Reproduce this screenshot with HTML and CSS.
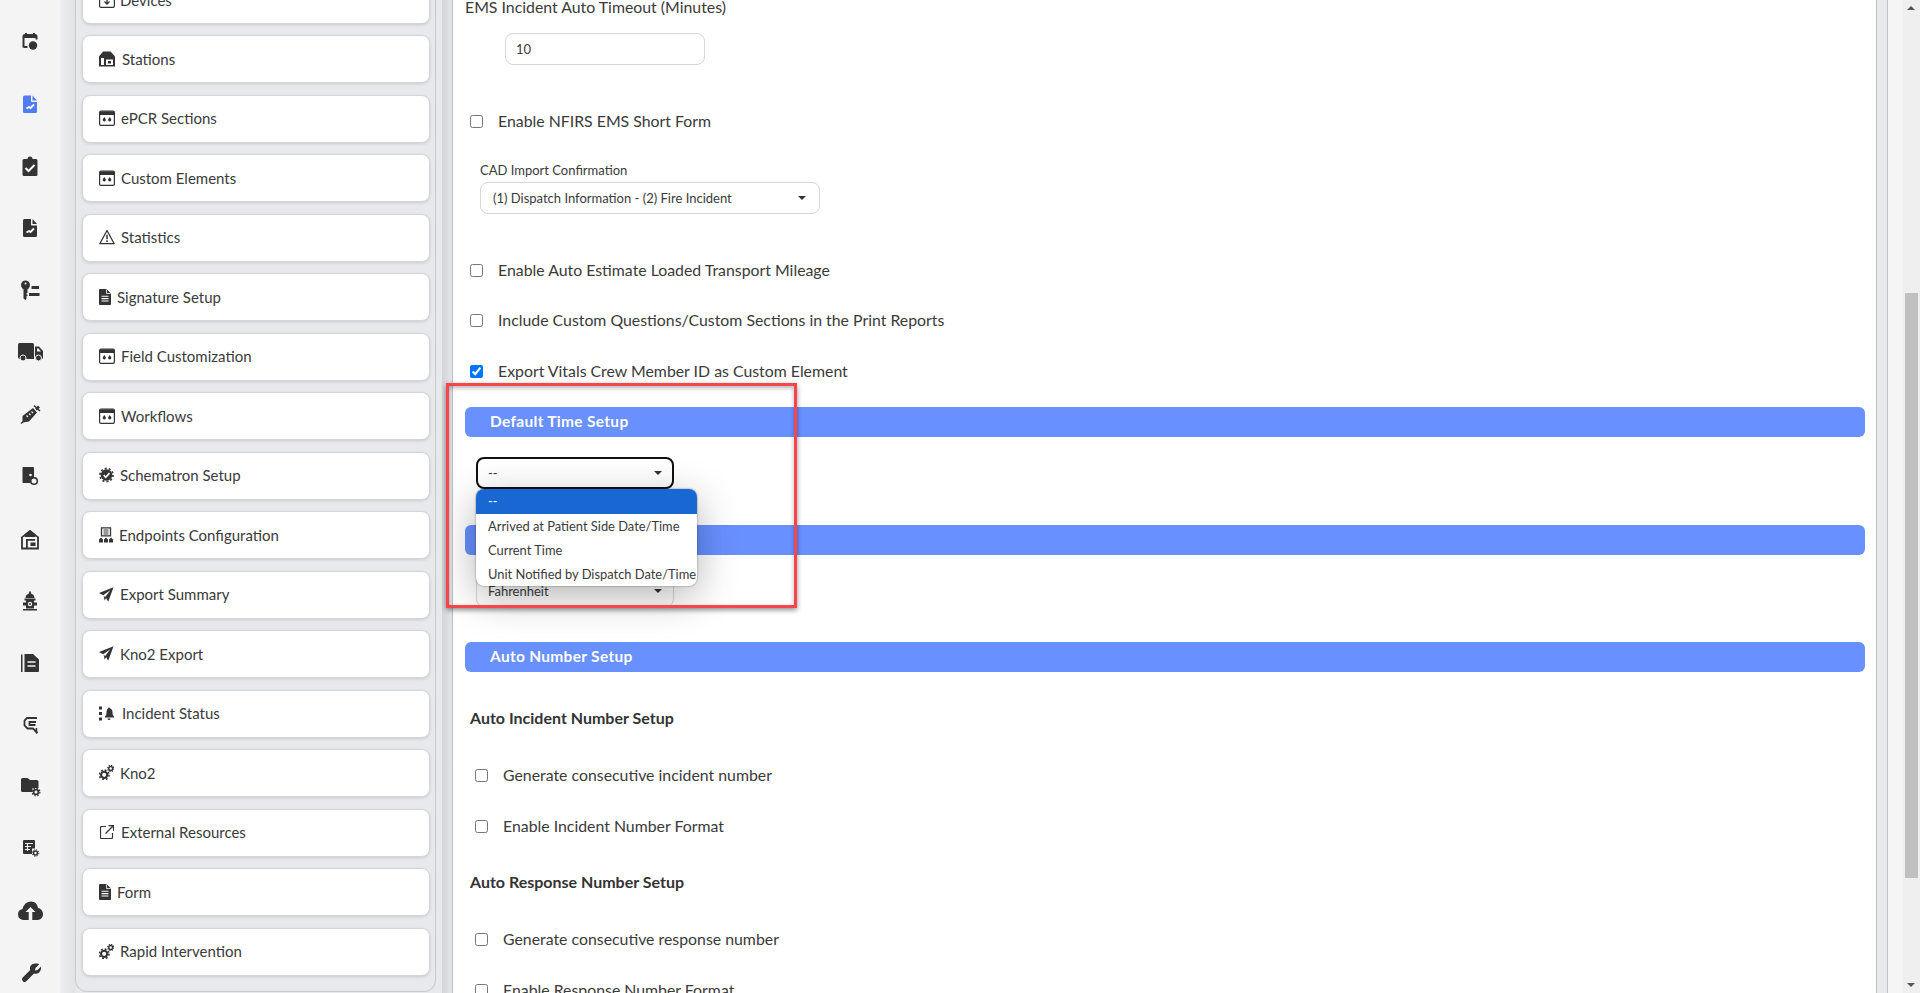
FILE: index.html
```html
<!DOCTYPE html>
<html lang="en">
<head>
    <meta charset="UTF-8">
    <title>Agency Setup</title>
    <link rel="stylesheet" href="styles.css">
</head>
<body>
    <svg class="defs" width="0" height="0">
        <symbol id="i-sliders" viewBox="0 0 16 16">
            <rect x="0.6" y="1.100" width="14.800" height="14.300" rx="1.400" fill="none" stroke="#333" stroke-width="1.200"/>
            <path d="M1 1.500h14v3.500H1z" fill="#333"/>
            <path d="M5.300 7l1.500 2.300a1.600 1.600 0 1 1-3 0zM10.700 7l1.500 2.300a1.600 1.600 0 1 1-3 0z" fill="#333"/>
        </symbol>
        <symbol id="i-plane" viewBox="0 0 16 16">
            <path d="M15.500 .2L0 6.500l4.500 2.400L12 3.500 6.800 10.300l3 5.500z" fill="#333"/>
            <path d="M5 9.500l1 5 2-3z" fill="#333"/>
        </symbol>
        <symbol id="i-gears" viewBox="0 0 16 16">
            <circle cx="5.500" cy="10.500" r="3.300" fill="none" stroke="#333" stroke-width="2.200"/>
            <circle cx="5.500" cy="10.500" r="5.200" fill="none" stroke="#333" stroke-width="1.600" stroke-dasharray="2 2.080"/>
            <circle cx="12.500" cy="3.700" r="2.100" fill="none" stroke="#333" stroke-width="1.500"/>
            <circle cx="12.500" cy="3.700" r="3.300" fill="none" stroke="#333" stroke-width="1.200" stroke-dasharray="1.300 1.290"/>
        </symbol>
        <symbol id="i-form" viewBox="0 0 12 16">
            <path d="M1 0h6.500L12 4.500V15a1 1 0 0 1-1 1H1a1 1 0 0 1-1-1V1a1 1 0 0 1 1-1z" fill="#333"/>
            <path d="M7.500 .5v4h4" fill="none" stroke="#fff" stroke-width=".8"/>
            <path d="M2.500 7.200h7M2.500 9.600h7M2.500 12h7" stroke="#fff" stroke-width="1.100"/>
        </symbol>
    </svg>

    <div class="layout">
        <nav class="rail">
            <a class="rail-link">
                <svg viewBox="0 0 28 24"><path d="M7.500 17.500V6.500a1.500 1.500 0 0 1 1.500-1.500h10a1.500 1.500 0 0 1 1.500 1.500v3" fill="none" stroke="#333" stroke-width="2"/><path d="M7 5h14v3H7zM9 3h2v3H9zM17 3h2v3h-2zM7.500 16h4v2h-4z" fill="#333"/><circle cx="17" cy="15.500" r="4.200" fill="#333"/></svg>
            </a>
            <a class="rail-link">
                <svg viewBox="0 0 28 24"><path d="M8.500 3.500H15v5.500a1 1 0 0 0 1 1h5v9.500a1.500 1.500 0 0 1-1.500 1.500h-11A1.500 1.500 0 0 1 7 19.500V5a1.500 1.500 0 0 1 1.500-1.500z" fill="#4f7df9"/><path d="M16.500 3.500l4.500 5h-4.500z" fill="#4f7df9"/><path d="M10.500 16.500l2.500-1.500 1.500 1 3.500-3.500" fill="none" stroke="#fff" stroke-width="1.800"/></svg>
            </a>
            <a class="rail-link">
                <svg viewBox="0 0 28 24"><path d="M8 5h3.500a2.500 2.500 0 0 1 5 0H20a1.500 1.500 0 0 1 1.500 1.500v14A1.500 1.500 0 0 1 20 22H8a1.500 1.500 0 0 1-1.500-1.500v-14A1.500 1.500 0 0 1 8 5z" fill="#333"/><path d="M9.500 14l3 3 6-6" fill="none" stroke="#fff" stroke-width="2"/></svg>
            </a>
            <a class="rail-link">
                <svg viewBox="0 0 28 24"><path d="M8.500 3H15v5.500a1 1 0 0 0 1 1h5V19.500a1.500 1.500 0 0 1-1.500 1.500h-11A1.500 1.500 0 0 1 7 19.500V4.500A1.500 1.500 0 0 1 8.500 3z" fill="#333"/><path d="M16.500 3l4.500 5h-4.500z" fill="#333"/><path d="M10.500 16.500l2.500-1.500 1.500 1 3.500-3.500" fill="none" stroke="#fff" stroke-width="1.800"/></svg>
            </a>
            <a class="rail-link">
                <svg viewBox="0 0 28 24"><circle cx="9.500" cy="7" r="4.500" fill="#333"/><path d="M7.500 9h4v6h-1v1.500h1v1.500h-1v2.500L9.500 22l-2-1.500z" fill="#333"/><circle cx="9.500" cy="5.500" r="1" fill="#f4f4f5"/><path d="M15.500 8h7.500v3h-7.500zM13 15h10.500v3H13z" fill="#333"/></svg>
            </a>
            <a class="rail-link">
                <svg viewBox="0 0 28 24"><path d="M3.500 3h13a1.500 1.500 0 0 1 1.500 1.500V19H4a2 2 0 0 1-2-2V4.500A1.500 1.500 0 0 1 3.500 3z" fill="#333"/><path d="M19 6.500h4l4 4.500v6.500a1.500 1.500 0 0 1-1.500 1.500H19z" fill="#333"/><path d="M21 8.500h1.500l2.500 3h-4z" fill="#f4f4f5"/><circle cx="7" cy="18" r="3" fill="#333" stroke="#f4f4f5" stroke-width="1"/><circle cx="22.500" cy="18" r="3" fill="#333" stroke="#f4f4f5" stroke-width="1"/></svg>
            </a>
            <a class="rail-link">
                <svg viewBox="0 0 28 24"><path d="M5 21.500l3-2.500" stroke="#333" stroke-width="1.500"/><path d="M6.500 14L17 6l4 4.500-8 9-6.500 1z" fill="#333"/><path d="M18 3.500l6 5.500" stroke="#333" stroke-width="1.500"/><path d="M20 7.500l3-3" stroke="#333" stroke-width="2.500"/><path d="M10.500 13.500l1.500 1.500M13 11.500l1.500 1.500M15.500 9.500l1.500 1.500" stroke="#f4f4f5" stroke-width="1.200"/></svg>
            </a>
            <a class="rail-link">
                <svg viewBox="0 0 28 24"><path d="M7.500 3h9.500a1 1 0 0 1 1 1v15H7.500a1 1 0 0 1-1-1V4a1 1 0 0 1 1-1z" fill="#333"/><circle cx="18" cy="17" r="3.300" fill="#f4f4f5" stroke="#333" stroke-width="1.600"/><circle cx="14.500" cy="11" r="2" fill="#f4f4f5" stroke="#333" stroke-width="1.300"/><path d="M17 13l3 1.500" stroke="#333" stroke-width="1.300"/></svg>
            </a>
            <a class="rail-link">
                <svg viewBox="0 0 28 24"><path d="M14 3l9 7v1.500L14 6 5 11.500V10z" fill="#333"/><path d="M9 7l5-4 5 4 .5 3h-11z" fill="#333"/><path d="M6 10v11.500h16V10" fill="none" stroke="#333" stroke-width="1.800"/><path d="M10 12h9v1.800h-7.200V21H10z" fill="#333"/><path d="M14.500 15.500h5V19h-5z" fill="#333"/></svg>
            </a>
            <a class="rail-link">
                <svg viewBox="0 0 28 24"><path d="M9.500 9a4.500 4.500 0 0 1 9 0zM13 2.500h2v2h-2zM8.500 9.500h11v2h-11zM10 11.500h8v8h-8zM7 20h14v1.500H7z" fill="#333"/><path d="M7 13.500h3v3H7zM18 13.500h3v3h-3z" fill="#333"/><circle cx="14" cy="15" r="2.200" fill="#f4f4f5"/><circle cx="14" cy="15" r="1" fill="#333"/></svg>
            </a>
            <a class="rail-link">
                <svg viewBox="0 0 28 24"><path d="M5 3.500h1.500V21H5zM8.500 3h8.500l6 5.500V20a1 1 0 0 1-1 1H8.500z" fill="#333"/><path d="M11.500 11h8M11.500 15h8" stroke="#f4f4f5" stroke-width="1.700"/></svg>
            </a>
            <a class="rail-link">
                <svg viewBox="0 0 28 24"><path d="M21 5H11L8.500 7.500v5L11.500 15.500H17l4.500 4.500" fill="none" stroke="#333" stroke-width="1.800"/><path d="M20 9h-6.500v3h6" fill="none" stroke="#333" stroke-width="1.800"/><path d="M20.500 15v5.500" stroke="#333" stroke-width="1.500"/></svg>
            </a>
            <a class="rail-link">
                <svg viewBox="0 0 28 24"><path d="M5 4.500a1.500 1.500 0 0 1 1.500-1.500h5L14 5h7a1.500 1.500 0 0 1 1.500 1.500V13h-6v4H6.500A1.500 1.500 0 0 1 5 15.500z" fill="#333"/><circle cx="20" cy="17" r="2.400" fill="none" stroke="#333" stroke-width="1.700"/><circle cx="20" cy="17" r="3.900" fill="none" stroke="#333" stroke-width="1.200" stroke-dasharray="1.500 1.560"/></svg>
            </a>
            <a class="rail-link">
                <svg viewBox="0 0 28 24"><path d="M7 4a1 1 0 0 1 1-1h10a1 1 0 0 1 1 1v7.500h-3V17H8a1 1 0 0 1-1-1z" fill="#333"/><path d="M9 6.500h8M9 9.500h6M9 12.500h5M11.500 6v8" stroke="#f4f4f5" stroke-width="1"/><circle cx="19.500" cy="16" r="2" fill="none" stroke="#333" stroke-width="1.500"/><circle cx="19.500" cy="16" r="3.300" fill="none" stroke="#333" stroke-width="1" stroke-dasharray="1.300 1.290"/></svg>
            </a>
            <a class="rail-link">
                <svg viewBox="0 0 28 24"><path d="M7 21a6 6 0 0 1-5-5.500 5.500 5.500 0 0 1 4.500-5.500C7.500 5.500 11 2.500 15 2.500s6.500 2.800 7 6.500c3.200.5 5 3.500 5 6a5.500 5.500 0 0 1-5.500 6z" fill="#333"/><path d="M14.500 8l5 5h-3.200v8h-3.600v-8H9.500z" fill="#f4f4f5"/></svg>
            </a>
            <a class="rail-link">
                <svg viewBox="0 0 28 24"><path d="M23 3.500l-3.500 3.500-.5 2.500 2.500-.5L25 5.500c.5 3-1 6-3.500 7-1.300.5-2.500.4-3.500.1L10.500 20a2.500 2.500 0 0 1-3.800-3.500l7.500-7.400c-.3-1-.4-2.300.1-3.600 1-2.500 4-3.500 8.700-2.500z" fill="#333"/></svg>
            </a>
        </nav>

        <div class="workspace">
            <aside class="side-panel">
                <ul class="side-list">
                    <li class="side-item">
                        <svg class="side-icon" width="16" height="16" viewBox="0 0 16 16"><rect x=".6" y="1.600" width="14.800" height="13.800" rx="1.400" fill="none" stroke="#333" stroke-width="1.200"/><path d="M8 6v6M5.500 9.500L8 12l2.500-2.500" fill="none" stroke="#333" stroke-width="1.300"/></svg>
                        <span>Devices</span>
                    </li>
                    <li class="side-item">
                        <svg class="side-icon gap-7" width="16" height="16" viewBox="0 0 16 16"><path d="M4 .5h7.500l4.500 5V15.500H0V5.500z" fill="#333"/><path d="M2 7h3v7H2zM7 8.500h7V14H7z" fill="#fff"/><path d="M9 10h3v2.500H9z" fill="#333"/></svg>
                        <span>Stations</span>
                    </li>
                    <li class="side-item">
                        <svg class="side-icon gap-6" width="16" height="16"><use href="#i-sliders"/></svg>
                        <span>ePCR Sections</span>
                    </li>
                    <li class="side-item">
                        <svg class="side-icon gap-6" width="16" height="16"><use href="#i-sliders"/></svg>
                        <span>Custom Elements</span>
                    </li>
                    <li class="side-item">
                        <svg class="side-icon gap-6" width="16" height="16" viewBox="0 0 16 16"><path d="M8 1.500L15.200 14.700H.8z" fill="none" stroke="#333" stroke-width="1.300" stroke-linejoin="round"/><path d="M8 5.800v4.500M8 11.300v1.700" stroke="#333" stroke-width="1.500"/></svg>
                        <span>Statistics</span>
                    </li>
                    <li class="side-item">
                        <svg class="side-icon gap-6" width="12" height="16"><use href="#i-form"/></svg>
                        <span>Signature Setup</span>
                    </li>
                    <li class="side-item">
                        <svg class="side-icon gap-6" width="16" height="16"><use href="#i-sliders"/></svg>
                        <span>Field Customization</span>
                    </li>
                    <li class="side-item">
                        <svg class="side-icon gap-6" width="16" height="16"><use href="#i-sliders"/></svg>
                        <span>Workflows</span>
                    </li>
                    <li class="side-item">
                        <svg class="side-icon gap-6" width="15" height="16" viewBox="0 0 16 16"><circle cx="8" cy="8" r="6.200" fill="#333"/><circle cx="8" cy="8" r="7" fill="none" stroke="#333" stroke-width="1.800" stroke-dasharray="2.200 2.200"/><path d="M5 8.200l2.200 2.200L11.200 6" fill="none" stroke="#fff" stroke-width="1.700"/></svg>
                        <span>Schematron Setup</span>
                    </li>
                    <li class="side-item">
                        <svg class="side-icon gap-6" width="14" height="16" viewBox="0 0 14 16"><path d="M2.500 .8h9v8h-9z" fill="none" stroke="#333" stroke-width="1.300"/><path d="M4.500 3h5M4.500 5h5M4.500 7h5" stroke="#333" stroke-width="1"/><path d="M0 15.500v-3l2-2 2 2v3zM5 15.500v-3l2-2 2 2v3zM10 15.500v-3l2-2 2 2v3z" fill="#333"/></svg>
                        <span>Endpoints Configuration</span>
                    </li>
                    <li class="side-item">
                        <svg class="side-icon gap-6" width="15" height="15"><use href="#i-plane"/></svg>
                        <span>Export Summary</span>
                    </li>
                    <li class="side-item">
                        <svg class="side-icon gap-6" width="15" height="15"><use href="#i-plane"/></svg>
                        <span>Kno2 Export</span>
                    </li>
                    <li class="side-item">
                        <svg class="side-icon gap-7" width="16" height="15" viewBox="0 0 16 15"><path d="M0 .5h3v3H0zM0 6h3v3H0zM0 11.500h3v3H0z" fill="#333"/><path d="M10 1.500a1 1 0 0 1 1 1c2 .5 2.500 2 2.500 4 0 2 .5 3 1.500 4v1H6v-1c1-1 1.500-2 1.500-4 0-2 .5-3.500 1.500-4a1 1 0 0 1 1-1zM8.500 12.500h3a1.500 1.500 0 0 1-3 0z" fill="#333"/></svg>
                        <span>Incident Status</span>
                    </li>
                    <li class="side-item">
                        <svg class="side-icon gap-6" width="15" height="15"><use href="#i-gears"/></svg>
                        <span>Kno2</span>
                    </li>
                    <li class="side-item">
                        <svg class="side-icon ext-icon" width="14" height="14" viewBox="0 0 14 14"><path d="M6 1.500H1.500a1 1 0 0 0-1 1V12.500a1 1 0 0 0 1 1H11.500a1 1 0 0 0 1-1V8" fill="none" stroke="#333" stroke-width="1.200"/><path d="M5.500 8.500L13 1M8.500 .7h5v5" fill="none" stroke="#333" stroke-width="1.200"/></svg>
                        <span>External Resources</span>
                    </li>
                    <li class="side-item">
                        <svg class="side-icon gap-6" width="12" height="16"><use href="#i-form"/></svg>
                        <span>Form</span>
                    </li>
                    <li class="side-item">
                        <svg class="side-icon gap-6" width="15" height="15"><use href="#i-gears"/></svg>
                        <span>Rapid Intervention</span>
                    </li>
                </ul>
            </aside>

            <main class="main-frame">
                <div class="content">
                    <label class="field-title">EMS Incident Auto Timeout (Minutes)</label>
                    <input class="text-input" type="text" value="10">

                    <label class="check-row first-check"><input type="checkbox"> Enable NFIRS EMS Short Form</label>

                    <div class="small-label">CAD Import Confirmation</div>
                    <div class="fake-select cad-select"><span>(1) Dispatch Information - (2) Fire Incident</span><i class="caret"></i></div>

                    <label class="check-row first-check"><input type="checkbox"> Enable Auto Estimate Loaded Transport Mileage</label>
                    <label class="check-row tight"><input type="checkbox"> Include Custom Questions/Custom Sections in the Print Reports</label>
                    <label class="check-row"><input type="checkbox" checked> Export Vitals Crew Member ID as Custom Element</label>

                    <h3 class="section-bar first-bar">Default Time Setup</h3>
                    <div class="fake-select time-select is-open">
                        <span>--</span><i class="caret"></i>
                        <ul class="options">
                            <li class="selected">--</li>
                            <li>Arrived at Patient Side Date/Time</li>
                            <li>Current Time</li>
                            <li>Unit Notified by Dispatch Date/Time</li>
                        </ul>
                    </div>

                    <h3 class="section-bar">Temperature Setup</h3>
                    <div class="fake-select time-select"><span>Fahrenheit</span><i class="caret"></i></div>

                    <h3 class="section-bar number-bar">Auto Number Setup</h3>

                    <h4 class="sub-title">Auto Incident Number Setup</h4>
                    <label class="check-row inset first-inset"><input type="checkbox"> Generate consecutive incident number</label>
                    <label class="check-row inset"><input type="checkbox"> Enable Incident Number Format</label>

                    <h4 class="sub-title second">Auto Response Number Setup</h4>
                    <label class="check-row inset second-inset"><input type="checkbox"> Generate consecutive response number</label>
                    <label class="check-row inset"><input type="checkbox"> Enable Response Number Format</label>
                </div>
            </main>
        </div>

        <div class="right-gutter"></div>
        <div class="scrollbar">
            <i class="scroll-up"></i>
            <div class="scroll-thumb"></div>
            <i class="scroll-down"></i>
        </div>
    </div>

    <div class="annotation"></div>
</body>
</html>
```

FILE: styles.css
```css
/* General Styles */
* {
    box-sizing: border-box;
}

html, body {
    height: 100%;
}

body {
    margin: 0;
    font-family: "Lato", "Liberation Sans", sans-serif;
    font-size: 15.85px;
    color: #3a3a3a;
    background-color: #f4f4f5;
    overflow: hidden;
}

.defs {
    position: absolute;
}

.layout {
    display: flex;
    height: 993px;
    overflow: hidden;
}

/* Icon rail */
.rail {
    width: 60px;
    flex-shrink: 0;
    padding-top: 11px;
    display: flex;
    flex-direction: column;
    background-color: #f4f4f5;
}

.rail-link {
    height: 62.07px;
    flex-shrink: 0;
    display: flex;
    align-items: center;
    justify-content: center;
}

.rail-link svg {
    width: 28px;
    height: 24px;
}

/* Middle area */
.workspace {
    flex: 1;
    display: flex;
    padding-left: 15px;
    background: linear-gradient(90deg, #eeeef0 0, #e2e3e6 15px, #e8e9ed 16px);
    border-right: 1px solid #c4c4c6;
}

.side-panel {
    width: 361px;
    height: 992px;
    flex-shrink: 0;
    background-color: #e8e9ed;
    border: 1px solid #c8c9cc;
    border-top: none;
    border-radius: 0 0 12px 12px;
    padding: 0 5px 0 6px;
    overflow: hidden;
}

.side-list {
    list-style: none;
    margin: -24px 0 0;
    padding: 0;
    display: flex;
    flex-direction: column;
    gap: 11.47px;
}

.side-item {
    height: 48px;
    flex-shrink: 0;
    display: flex;
    align-items: center;
    padding-left: 16px;
    padding-bottom: 1px;
    font-size: 15px;
    background-color: #fff;
    border: 1px solid #d4d5d8;
    border-radius: 8px;
    box-shadow: 0 1px 3px rgba(0, 0, 0, 0.12);
}

.side-icon {
    flex-shrink: 0;
    margin-right: 5px;
}

.side-icon.gap-6 {
    margin-right: 6px;
}

.side-icon.gap-7 {
    margin-right: 7px;
}

.side-icon.ext-icon {
    margin-left: 1px;
    margin-right: 7px;
}

/* Main form */
.main-frame {
    flex: 1;
    margin-left: 6px;
    padding: 0 10px;
    background: linear-gradient(90deg, #d3d4d8 0, #e4e5e8 10px, #e8e9ed 11px);
    min-width: 0;
}

.content {
    height: 993px;
    padding: 0 11px 0 12px;
    background-color: #fff;
    border-left: 1px solid #bdbdbd;
    border-right: 1px solid #bdbdbd;
    overflow: hidden;
}

.field-title {
    display: block;
    margin-top: -5px;
    line-height: 24px;
}

.text-input {
    display: block;
    width: 200px;
    height: 32px;
    margin: 14px 0 0 40px;
    padding: 0 10px;
    font: 13px "Lato", sans-serif;
    color: #3a3a3a;
    border: 1px solid #d6d6d6;
    border-radius: 8px;
}

.check-row {
    display: flex;
    align-items: center;
    height: 24px;
    margin-top: 27px;
    padding-left: 5px;
}

.check-row input {
    width: 13px;
    height: 13px;
    margin: 2px 15px 0 0;
}

.check-row.first-check {
    margin-top: 43px;
}

.check-row.tight {
    margin-top: 26px;
}

.check-row.inset {
    padding-left: 10px;
}

.check-row.first-inset {
    margin-top: 32px;
}

.check-row.second-inset {
    margin-top: 32px;
}

.small-label {
    margin: 28px 0 0 15px;
    font-size: 13px;
    line-height: 20px;
}

.fake-select {
    position: relative;
    display: flex;
    align-items: center;
    justify-content: space-between;
    height: 32px;
    padding: 0 13px 0 12px;
    font-size: 13px;
    background-color: #fff;
    border: 1px solid #d6d6d6;
    border-radius: 8px;
}

.cad-select {
    width: 340px;
    margin: 2px 0 0 15px;
}

.time-select {
    width: 198px;
    margin: 20px 0 0 11px;
    padding: 0 11px;
}

.time-select.is-open {
    border: 2px solid #111;
    padding: 0 10px;
}

.caret {
    width: 0;
    height: 0;
    border-left: 4px solid transparent;
    border-right: 4px solid transparent;
    border-top: 4px solid #333;
}

.options {
    position: absolute;
    left: -2px;
    top: 30px;
    z-index: 5;
    width: 221px;
    margin: 0;
    padding: 0;
    list-style: none;
    font-size: 12.9px;
    background-color: #fff;
    border-radius: 8px;
    overflow: hidden;
    box-shadow: 0 0 2px rgba(0, 0, 0, 0.5), 0 10px 40px rgba(0, 0, 0, 0.3);
}

.options li {
    height: 24px;
    padding-left: 12px;
    line-height: 24px;
    white-space: nowrap;
}

.options li.selected {
    height: 25px;
    color: #fff;
    background-color: #1967d2;
}

.section-bar {
    height: 30px;
    margin: 36px 0 0;
    padding-left: 25px;
    font-size: 15.5px;
    font-weight: 700;
    line-height: 29px;
    letter-spacing: 0.3px;
    color: #fff;
    background-color: #6890ff;
    border-radius: 6px;
}

.section-bar.first-bar {
    margin-top: 25px;
}

.section-bar.number-bar {
    margin-top: 35px;
}

.sub-title {
    margin: 34px 0 0 5px;
    font-size: 16px;
    font-weight: 700;
    line-height: 24px;
    color: #333;
}

.sub-title.second {
    margin-top: 33px;
}

/* Right edge */
.right-gutter {
    width: 15px;
    flex-shrink: 0;
    background-color: #f5f5f5;
}

.scrollbar {
    position: relative;
    width: 17px;
    flex-shrink: 0;
    background-color: #efefef;
}

.scroll-thumb {
    position: absolute;
    top: 293px;
    left: 2px;
    width: 13px;
    height: 585px;
    background-color: #c0c0c0;
}

.scroll-up,
.scroll-down {
    position: absolute;
    left: 4px;
    width: 0;
    height: 0;
    border-left: 4px solid transparent;
    border-right: 4px solid transparent;
}

.scroll-up {
    top: 6px;
    border-bottom: 4px solid #555;
}

.scroll-down {
    bottom: 6px;
    border-top: 4px solid #555;
}

/* Red highlight drawn over the screenshot */
.annotation {
    position: absolute;
    left: 446px;
    top: 383px;
    width: 351px;
    height: 225px;
    z-index: 10;
    border: 3px solid #f7454c;
    box-shadow: 0 2px 5px rgba(0, 0, 0, 0.45), inset 0 2px 4px rgba(0, 0, 0, 0.3);
}
```
